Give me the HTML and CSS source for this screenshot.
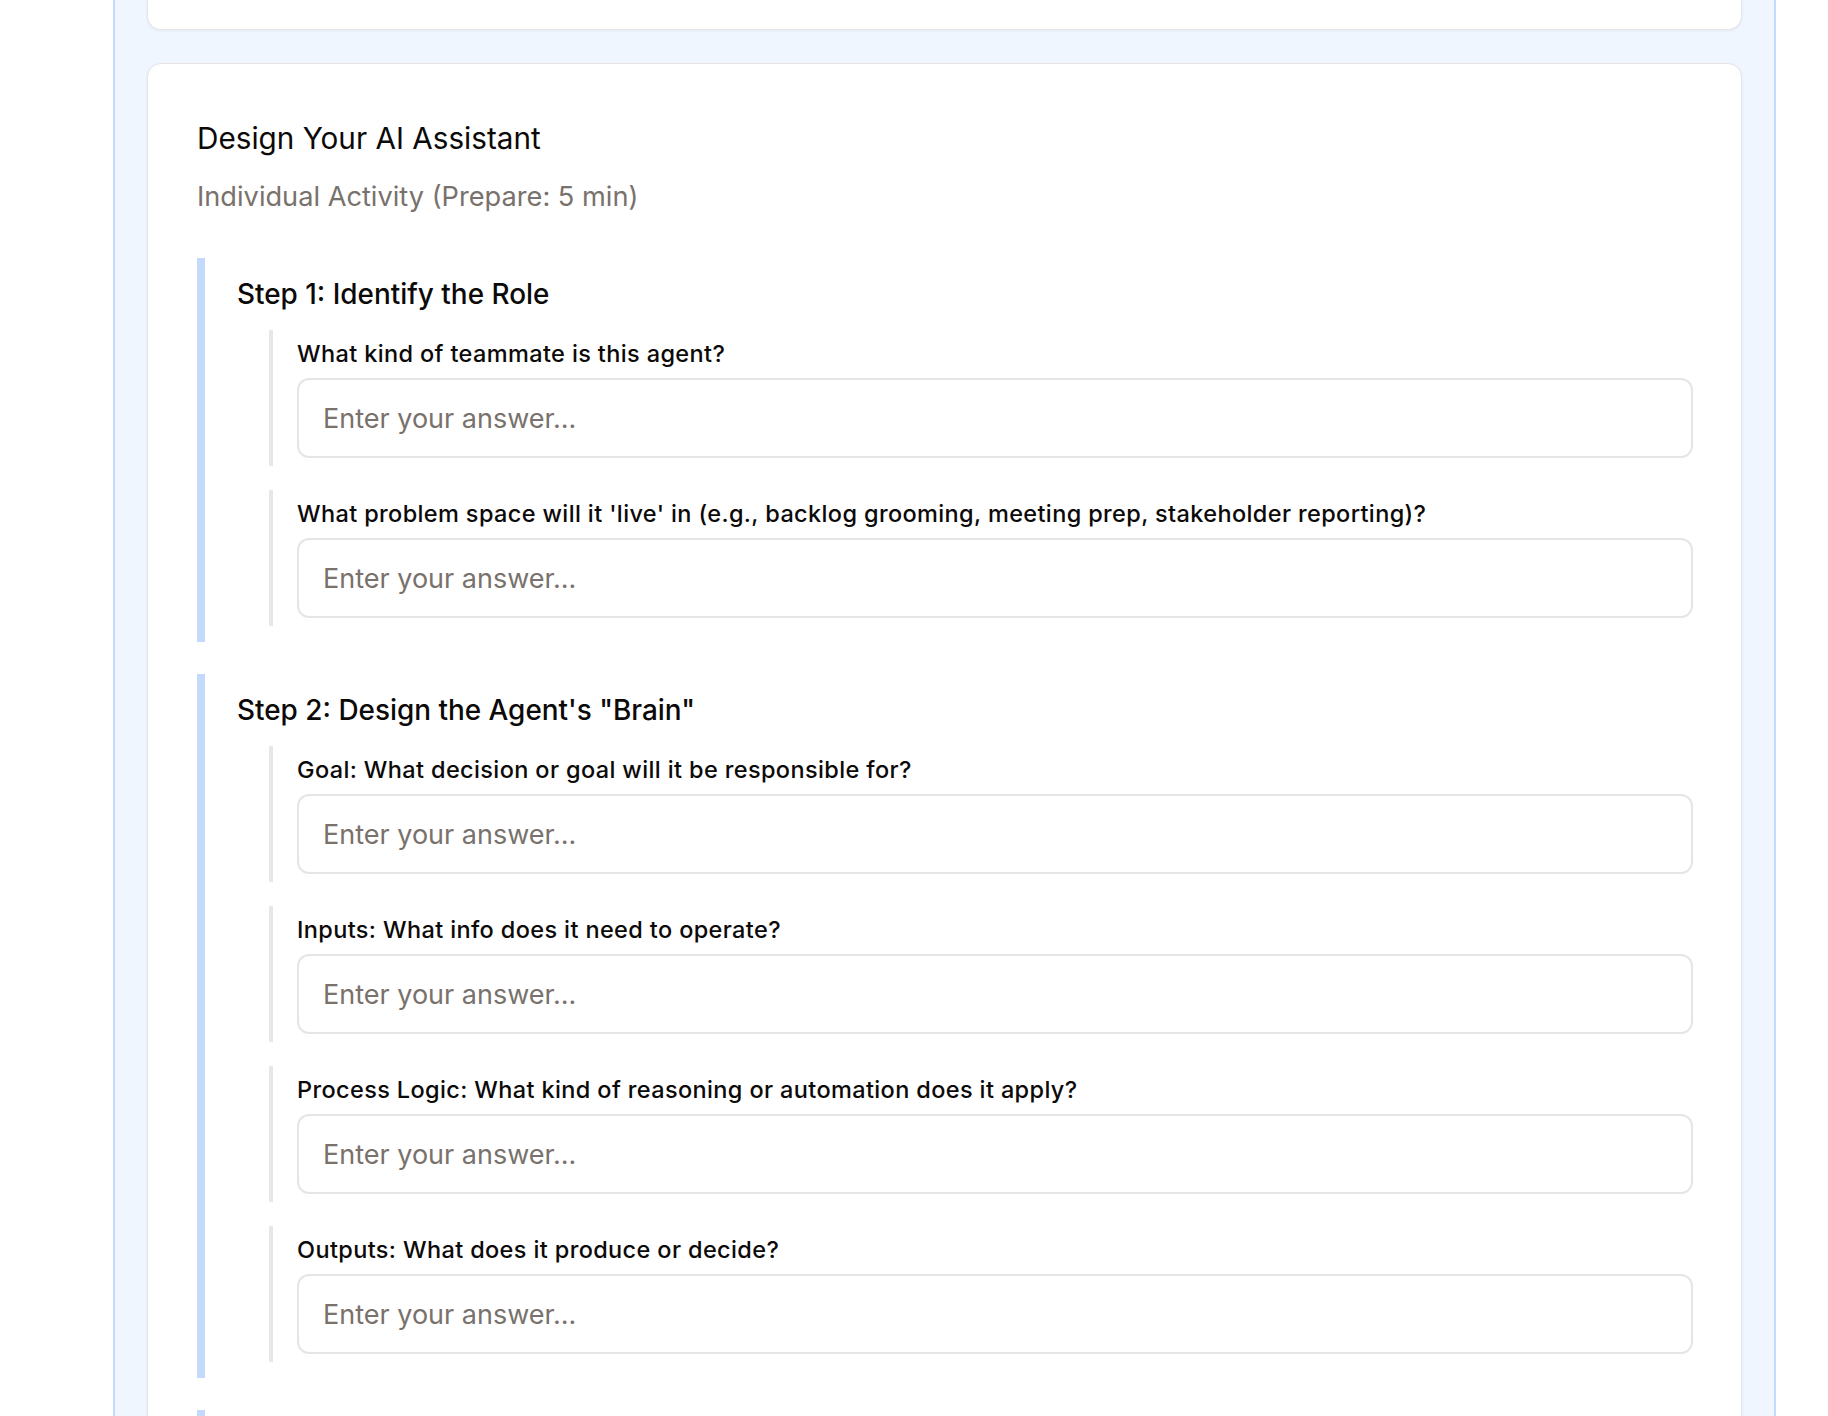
FILE: index.html
```html
<!DOCTYPE html>
<html lang="en">
<head>
<meta charset="utf-8">
<title>Design Your AI Assistant</title>
<link rel="stylesheet" href="styles.css">
</head>
<body>
<div class="panel">
  <div class="card card-prev"></div>
  <section class="card">
    <h2 class="title">Design Your AI Assistant</h2>
    <p class="subtitle">Individual Activity (Prepare: 5 min)</p>
    <div class="steps">
      <div class="step">
        <h3 class="step-title">Step 1: Identify the Role</h3>
        <div class="questions">
          <div class="question">
            <label class="q-label">What kind of teammate is this agent?</label>
            <input class="q-input" type="text" placeholder="Enter your answer...">
          </div>
          <div class="question">
            <label class="q-label">What problem space will it 'live' in (e.g., backlog grooming, meeting prep, stakeholder reporting)?</label>
            <input class="q-input" type="text" placeholder="Enter your answer...">
          </div>
        </div>
      </div>
      <div class="step">
        <h3 class="step-title">Step 2: Design the Agent's "Brain"</h3>
        <div class="questions">
          <div class="question">
            <label class="q-label">Goal: What decision or goal will it be responsible for?</label>
            <input class="q-input" type="text" placeholder="Enter your answer...">
          </div>
          <div class="question">
            <label class="q-label">Inputs: What info does it need to operate?</label>
            <input class="q-input" type="text" placeholder="Enter your answer...">
          </div>
          <div class="question">
            <label class="q-label">Process Logic: What kind of reasoning or automation does it apply?</label>
            <input class="q-input" type="text" placeholder="Enter your answer...">
          </div>
          <div class="question">
            <label class="q-label">Outputs: What does it produce or decide?</label>
            <input class="q-input" type="text" placeholder="Enter your answer...">
          </div>
        </div>
      </div>
      <div class="step step-next"></div>
    </div>
  </section>
</div>
</body>
</html>
```
FILE: styles.css
```css
* { box-sizing: border-box; }

html, body {
  margin: 0;
  padding: 0;
  background: #ffffff;
}

body {
  font-family: "Inter", "Noto Sans", "DejaVu Sans", sans-serif;
  color: #1c1917;
  padding-left: 113px;
  padding-right: 52px;
}

.panel {
  background: #eff6ff;
  border-left: 2px solid #c3dafa;
  border-right: 2px solid #c3dafa;
  padding: 0 32px;
  display: flex;
  flex-direction: column;
  gap: 33px;
}

.card {
  background: #ffffff;
  border: 1px solid #e7e5e4;
  border-radius: 14px;
  box-shadow: 0 1px 3px rgba(0, 0, 0, 0.06);
  padding: 48px 48px 0 49px;
}

.card-prev {
  height: 30px;
  padding: 0;
  border-top: none;
  border-radius: 0 0 14px 14px;
}

.title {
  margin: 8px 0 0 0;
  font-size: 29.7px;
  line-height: 36px;
  font-weight: 400;
  color: #0c0a09;
}

.subtitle {
  margin: 23px 0 0 0;
  font-size: 27.2px;
  line-height: 36px;
  font-weight: 400;
  color: #78716c;
}

.steps {
  margin-top: 43px;
  display: flex;
  flex-direction: column;
  gap: 32px;
}

.step {
  border-left: 8px solid #c3dafa;
  padding: 16px 0 16px 32px;
}

.step-next {
  min-height: 200px;
}

.step-title {
  margin: 0 0 16px 0;
  font-size: 27.9px;
  line-height: 40px;
  font-weight: 500;
  color: #0c0a09;
}

.questions {
  margin-left: 32px;
  display: flex;
  flex-direction: column;
  gap: 24px;
}

.question {
  border-left: 4px solid #e7e7ea;
  padding: 8px 0 8px 24px;
}

.q-label {
  display: block;
  font-size: 23.5px;
  line-height: 32px;
  letter-spacing: 0.37px;
  font-weight: 500;
  color: #0c0a09;
  margin-bottom: 8px;
}

.q-input {
  display: block;
  width: 100%;
  height: 80px;
  border: 2px solid #e5e5e5;
  border-radius: 12px;
  padding: 0 24px;
  font-family: "Inter", "Noto Sans", sans-serif;
  font-size: 27px;
  color: #1c1917;
  background: #ffffff;
  outline: none;
}

.q-input::placeholder {
  color: #78716c;
  opacity: 1;
}
```
